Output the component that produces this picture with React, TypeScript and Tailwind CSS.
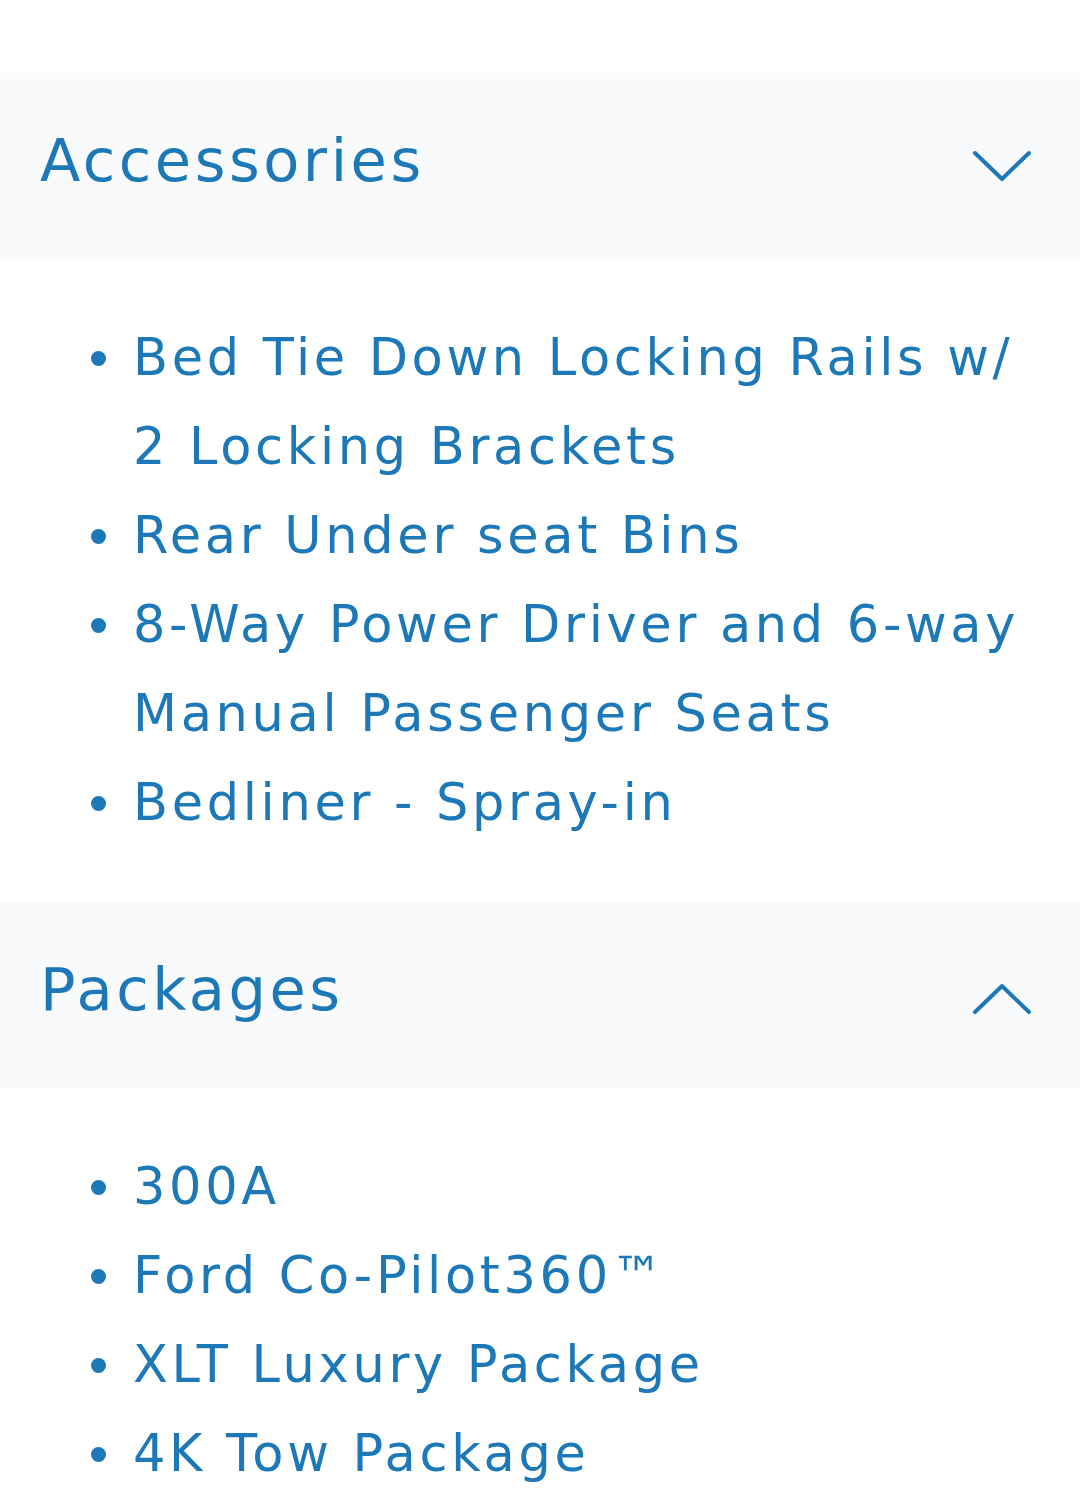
import { ReactNode } from "react";

const sections = [
  {
    title: "Accessories",
    open: false,
    items: [
      "Bed Tie Down Locking Rails w/ 2 Locking Brackets",
      "Rear Under seat Bins",
      "8-Way Power Driver and 6-way Manual Passenger Seats",
      "Bedliner - Spray-in",
    ],
  },
  {
    title: "Packages",
    open: true,
    items: ["300A", "Ford Co-Pilot360™", "XLT Luxury Package", "4K Tow Package"],
  },
];

function Chevron({ up }: { up: boolean }) {
  return (
    <svg width="60" height="32" viewBox="0 0 60 32" fill="none" className={up ? "mt-2" : "mt-0"}>
      <path
        d={up ? "M3 29 L30 3 L57 29" : "M3 3 L30 29 L57 3"}
        stroke="#1c78b6"
        strokeWidth="4"
        strokeLinecap="round"
        strokeLinejoin="round"
      />
    </svg>
  );
}

function Section({ title, open, children }: { title: string; open: boolean; children: ReactNode }) {
  return (
    <section>
      <div className="flex h-[186px] items-center justify-between bg-[#f9fafb] pl-10 pr-12">
        <h2 className="-mt-3 text-[59px] leading-none tracking-[0.06em] text-[#1c78b6]">{title}</h2>
        <Chevron up={open} />
      </div>
      {children}
    </section>
  );
}

export default function App() {
  return (
    <div
      className="min-h-[1504px] bg-white pt-[73px]"
      style={{ fontFamily: '"DejaVu Sans", "Liberation Sans", sans-serif' }}
    >
      {sections.map((s, i) => (
        <Section key={s.title} title={s.title} open={s.open}>
          <ul className={`pl-[133px] pr-10 pt-[54px] ${i === 0 ? "pb-[55px]" : ""}`}>
            {s.items.map((item) => (
              <li
                key={item}
                className="relative text-[51px] leading-[89px] tracking-[0.072em] text-[#1c78b6]"
              >
                <span className="absolute left-[-42px] top-[38px] h-[15px] w-[15px] rounded-full bg-[#1c78b6]" />
                {item}
              </li>
            ))}
          </ul>
        </Section>
      ))}
    </div>
  );
}
